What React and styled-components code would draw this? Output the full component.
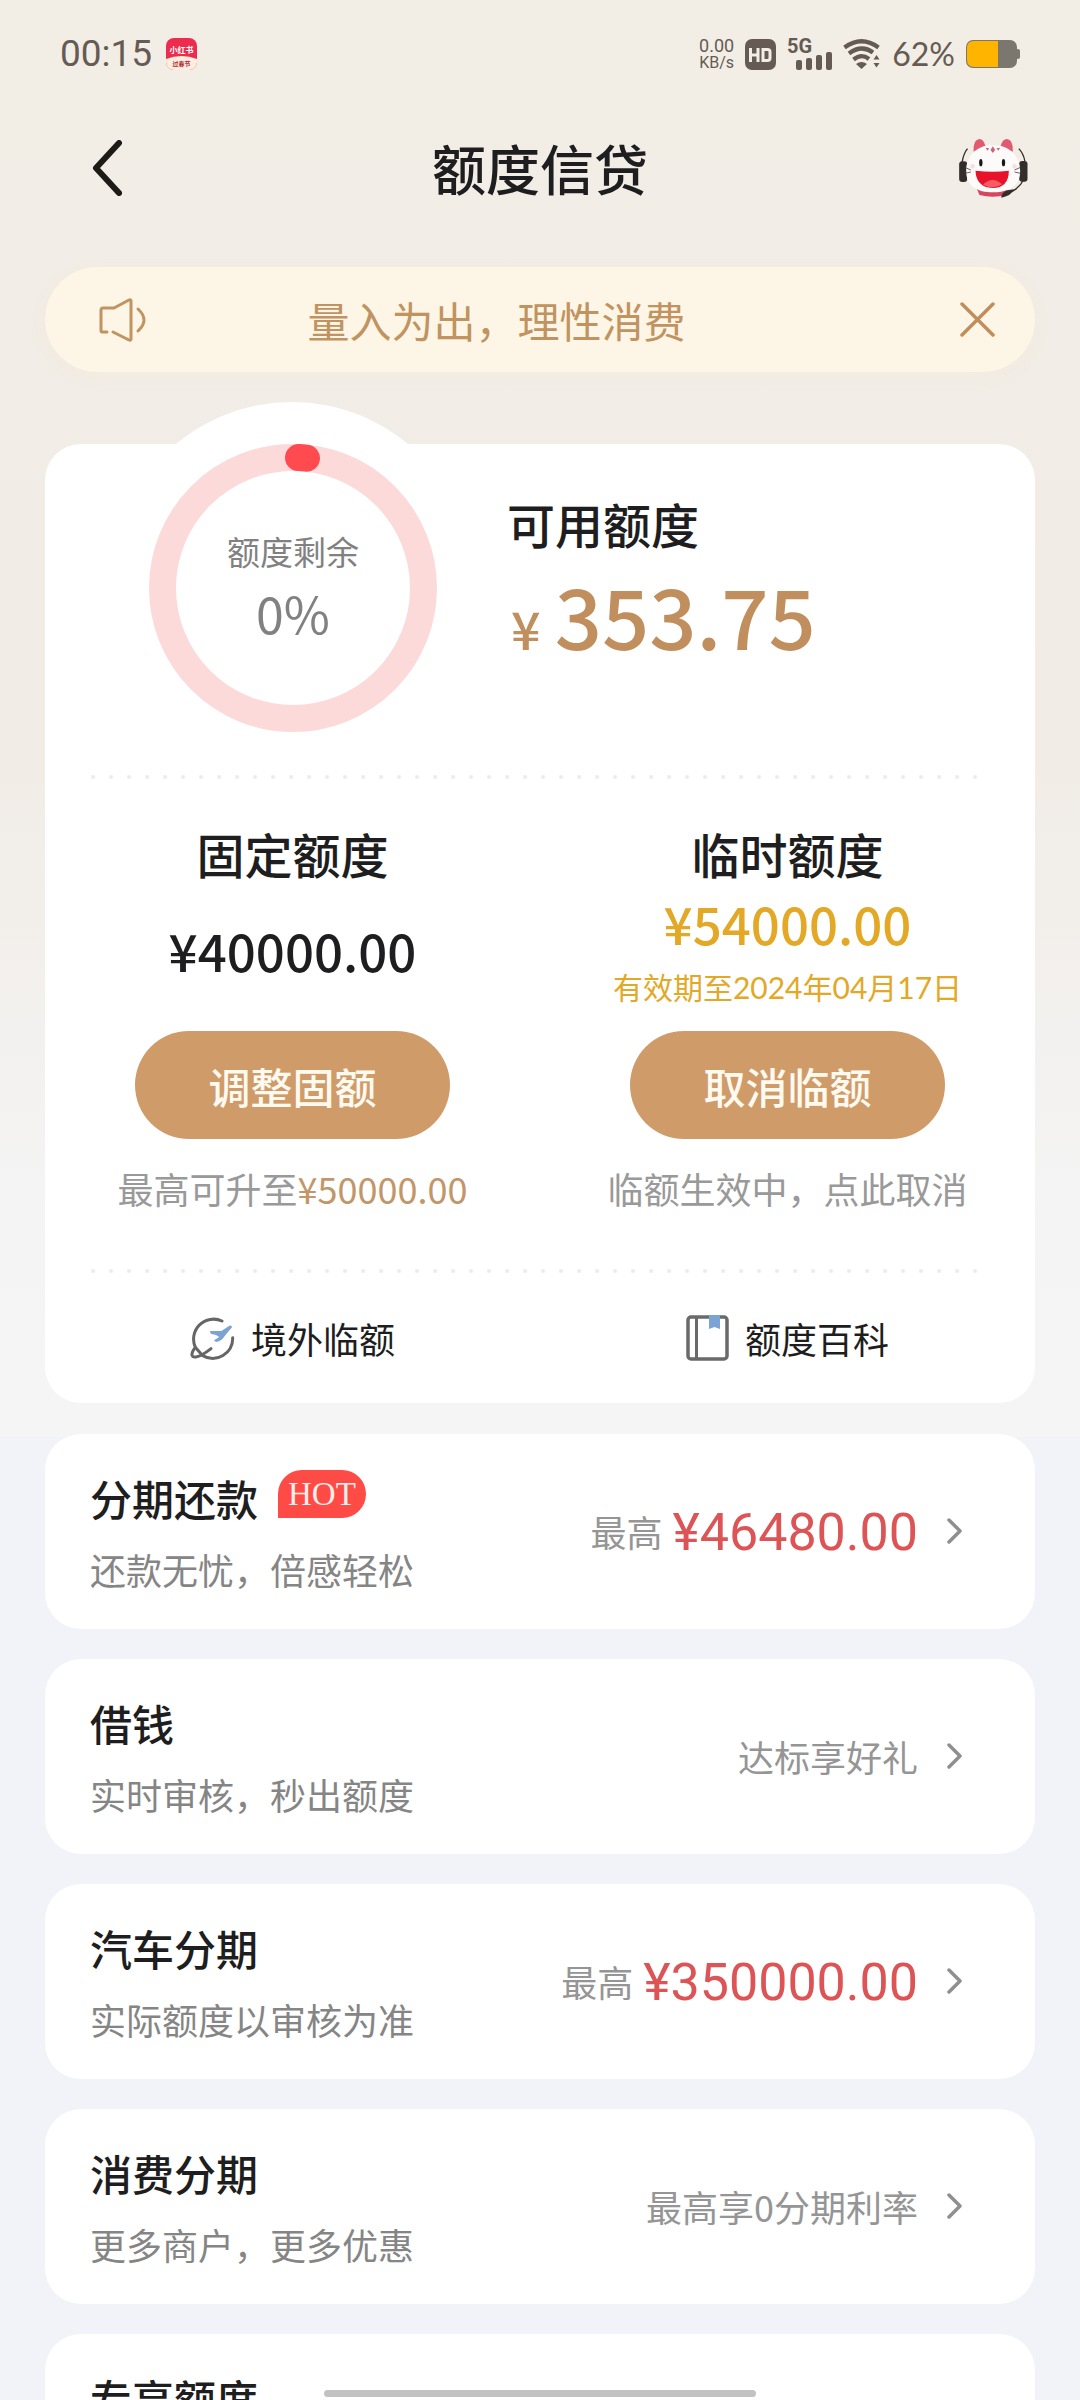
import React from 'react';
import styled, { createGlobalStyle } from 'styled-components';

const GlobalStyle = createGlobalStyle`
    * {
        box-sizing: border-box;
    }

    body {
        margin: 0;
        background-color: #f1f3f9;
        font-family: 'Noto Sans CJK SC', 'Noto Sans', sans-serif;
        color: #1e1e20;
    }

    h1,
    h2,
    h3,
    p {
        margin: 0;
        font-weight: 500;
    }

    button {
        padding: 0;
        border: 0;
        background: none;
        font: inherit;
        color: inherit;
        cursor: pointer;
    }

    a {
        color: inherit;
        text-decoration: none;
    }

    svg {
        display: block;
        flex-shrink: 0;
    }
`;

const Screen = styled.div`
    height: 100vh;
    overflow-y: auto;
    scrollbar-width: none;
`;

const Page = styled.div`
    padding-bottom: 60px;
    background: linear-gradient(#f2ede5 0, #f1ece6 760px, #f4f4f4 1200px, #f5f5f5 1437px)
        no-repeat;
    background-size: 100% 1437px;
`;

const StatusBar = styled.div`
    display: flex;
    align-items: center;
    justify-content: space-between;
    height: 108px;
    padding: 0 60px;
    color: #655b54;
`;

const StatusGroup = styled.div`
    display: flex;
    align-items: center;
    gap: ${({ gap }) => gap}px;
`;

const Clock = styled.span`
    font-family: Roboto, sans-serif;
    font-size: 37px;
    line-height: 44px;
`;

const NetSpeed = styled.div`
    display: flex;
    flex-direction: column;
    align-items: center;
    font-family: Roboto, sans-serif;
    font-size: 18px;
    line-height: 18px;
`;

const NetUnit = styled.span`
    font-size: 16px;
    line-height: 16px;
`;

const Percent = styled.span`
    font-family: Lato, sans-serif;
    font-size: 32px;
    line-height: 40px;
`;

const NavBar = styled.header`
    display: flex;
    align-items: center;
    justify-content: space-between;
    height: 120px;
    padding: 0 52px;
`;

const NavButton = styled.button`
    display: flex;
    width: 70px;
    justify-content: flex-end;
`;

const NavTitle = styled.h1`
    font-size: 54px;
    line-height: 76px;
`;

const Notice = styled.div`
    display: flex;
    align-items: center;
    height: 105px;
    margin: 39px 45px 0;
    padding: 0 40px 0 54px;
    border-radius: 53px;
    background-color: #fdf6e6;
    box-shadow: 0 4px 14px #f5ead766;
    color: #c09360;
`;

const NoticeText = styled.p`
    flex: 1;
    padding-right: 114px;
    font-size: 42px;
    font-weight: 400;
    line-height: 60px;
    text-align: center;
`;

const Card = styled.section`
    position: relative;
    margin: 72px 45px 0;
    border-radius: 36px;
    background-color: #ffffff;

    /* white bulge behind the ring */
    &::before {
        content: '';
        position: absolute;
        top: -42px;
        left: 66px;
        width: 362px;
        height: 362px;
        border-radius: 50%;
        background-color: #ffffff;
    }
`;

const Summary = styled.div`
    position: relative;
    display: flex;
    gap: 70px;
    padding: 0 46px 43px 104px;
`;

const Ring = styled.div`
    display: grid;
    width: 288px;
    height: 288px;
    place-items: center;

    > * {
        grid-area: 1 / 1;
    }
`;

const RingLabel = styled.div`
    padding-bottom: 8px;
    text-align: center;
    color: #818181;
`;

const RingName = styled.p`
    font-size: 33px;
    font-weight: 400;
    line-height: 50px;
`;

const RingValue = styled.p`
    margin-top: 6px;
    font-size: 50px;
    font-weight: 400;
    line-height: 60px;
`;

const Available = styled.div`
    padding-top: 49px;
`;

const Title = styled.h2`
    font-size: 48px;
    line-height: 60px;
`;

const Balance = styled.p`
    display: flex;
    align-items: baseline;
    gap: 14px;
    margin-top: 13px;
    padding-left: 4px;
    color: #c08f5d;
    font-size: 83px;
    line-height: 96px;
`;

const BalanceSign = styled.span`
    font-size: 52px;
`;

const DotLine = styled.div`
    height: 4px;
    margin: 0 46px;
    background: radial-gradient(circle at 2px 2px, #ebebeb 1px, #ffffff 3px) repeat-x;
    background-size: 18px 4px;
`;

const Columns = styled.div`
    display: grid;
    grid-template-columns: 1fr 1fr;
`;

const Limit = styled.div`
    display: flex;
    flex-direction: column;
    align-items: center;
    padding: 44px 0 56px;
`;

const LimitValue = styled.div`
    display: flex;
    flex-direction: column;
    align-items: center;
    justify-content: center;
    gap: 14px;
    height: 148px;
    padding-bottom: 14px;
    color: ${({ $active }) => ($active ? '#e3a826' : '#1e1e20')};
`;

const LimitAmount = styled.p`
    font-size: 51px;
    line-height: 60px;
`;

const LimitDate = styled.p`
    font-family: Lato, 'Noto Sans CJK SC', sans-serif;
    font-size: 30px;
    font-weight: 400;
    line-height: 40px;
`;

const LimitButton = styled.button`
    width: 315px;
    height: 108px;
    border-radius: 54px;
    background-color: #cf9c69;
    color: #fffaf0;
    font-size: 42px;
    font-weight: 500;
`;

const Caption = styled.p`
    margin-top: 24px;
    color: #999999;
    font-size: 36px;
    font-weight: 400;
    line-height: 50px;
`;

const CaptionAmount = styled.span`
    color: #c29668;
`;

const ToolLink = styled.a`
    display: flex;
    align-items: center;
    justify-content: center;
    gap: 16px;
    height: 130px;
    font-size: 36px;
`;

const ProductList = styled.nav`
    display: flex;
    flex-direction: column;
    gap: 30px;
    margin: 31px 45px 0;
`;

const Product = styled.a`
    display: flex;
    align-items: center;
    justify-content: space-between;
    padding: 34px 72px 35px 45px;
    border-radius: 36px;
    background-color: #ffffff;
`;

const ProductHead = styled.div`
    display: flex;
    align-items: center;
    gap: 20px;
`;

const ProductName = styled.h3`
    font-size: 42px;
    line-height: 60px;
`;

const HotBadge = styled.span`
    align-self: flex-start;
    margin-top: 2px;
    padding: 0 10px;
    border-radius: 24px 24px 24px 0;
    background-color: #ff4b45;
    color: #ffeeec;
    font-family: 'Liberation Serif', serif;
    font-size: 33px;
    line-height: 48px;
`;

const ProductDesc = styled.p`
    margin-top: 16px;
    color: #858585;
    font-size: 36px;
    font-weight: 400;
    line-height: 50px;
`;

const ProductInfo = styled.div`
    display: flex;
    align-items: center;
    color: #959595;
    font-size: 36px;
    line-height: 60px;

    svg {
        margin-left: 29px;
    }
`;

const ProductAmount = styled.span`
    margin-left: 10px;
    padding-top: 4px;
    color: #dc5456;
    font-family: Roboto, sans-serif;
    font-size: 52px;
`;

const HomeBar = styled.div`
    position: fixed;
    bottom: 3px;
    left: 30%;
    right: 30%;
    height: 7px;
    border-radius: 4px;
    background-color: #c2c2c2;
`;

const products = [
    { name: '分期还款', desc: '还款无忧，倍感轻松', hot: true, info: '最高', amount: '¥46480.00' },
    { name: '借钱', desc: '实时审核，秒出额度', info: '达标享好礼' },
    { name: '汽车分期', desc: '实际额度以审核为准', info: '最高', amount: '¥350000.00' },
    { name: '消费分期', desc: '更多商户，更多优惠', info: '最高享0分期利率' },
    { name: '专享额度' },
];

function AppBadge() {
    return (
        <svg width="31" height="32" viewBox="0 0 31 32">
            <rect width="31" height="32" rx="8" fill="#ec2b4e" />
            <path d="M0 21Q15.500 15 31 21V24A8 8 0 0 1 23 32H8A8 8 0 0 1 0 24Z" fill="#fdeedd" />
            <g fontFamily="Noto Sans CJK SC" fontWeight="700" textAnchor="middle">
                <text x="15.500" y="15" fontSize="8" fill="#ffffff">小红书</text>
                <text x="15.500" y="28" fontSize="6" fill="#b3243a">过春节</text>
            </g>
        </svg>
    );
}

function HdIcon() {
    return (
        <svg width="31" height="31" viewBox="0 0 31 31">
            <rect width="31" height="31" rx="7" fill="#655b54" />
            <g fill="none" stroke="#f2ede5" strokeWidth="3">
                <path d="M5.500 9V23M13 9V23M5.500 16H13" />
                <path d="M18 10.500H22.500Q25 10.500 25 13V19Q25 21.500 22.500 21.500H18Z" />
            </g>
        </svg>
    );
}

function SignalIcon() {
    return (
        <svg width="45" height="40" viewBox="0 -4 45 40" fill="#655b54">
            <text x="0" y="15" fontFamily="Roboto" fontWeight="700" fontSize="20">5G</text>
            <rect x="9" y="22" width="6" height="10" rx="2" />
            <rect x="19" y="20" width="6" height="12" rx="2" />
            <rect x="29" y="17" width="6" height="15" rx="2" />
            <rect x="39" y="14" width="6" height="18" rx="2" />
        </svg>
    );
}

function WifiIcon() {
    return (
        <svg width="38" height="30" viewBox="0 0 38 30">
            <g fill="none" stroke="#655b54" strokeWidth="4.200">
                <path d="M1.500 8.500Q18.500 -4 35.500 8.500" />
                <path d="M6 14.500Q18.500 5 30 13.500" />
                <path d="M10.500 20.500Q18.500 14 26 20" />
            </g>
            <path d="M13 25Q18.500 21 24 25L18.500 30ZM30.500 20.500 33.500 16 36.500 20.500ZM30.500 24 33.500 28.500 36.500 24Z" fill="#655b54" />
        </svg>
    );
}

function BatteryIcon() {
    return (
        <svg width="54" height="28" viewBox="0 0 54 28">
            <rect width="51" height="28" rx="7" fill="#7b776e" />
            <rect x="50" y="9" width="4" height="10" rx="2" fill="#7b776e" />
            <path d="M32 1V27H8Q1 27 1 20V8Q1 1 8 1Z" fill="#ffb400" />
        </svg>
    );
}

function BackIcon() {
    return (
        <svg width="30" height="56" viewBox="0 0 30 56">
            <path d="M27 3 4 28 27 53" fill="none" stroke="#1e1a16" strokeWidth="6" strokeLinecap="round" strokeLinejoin="round" />
        </svg>
    );
}

function CatIcon() {
    return (
        <svg width="69" height="62" viewBox="57 50 206 186">
            <path d="M82 85Q70 100 66 125M236 85Q250 100 254 122" fill="none" stroke="#332e2b" strokeWidth="4" />
            <rect x="57" y="123" width="24" height="62" rx="9" fill="#332e2b" />
            <rect x="237" y="122" width="25" height="62" rx="9" fill="#332e2b" />
            <path d="M110 205H205L197 224Q158 234 118 224Z" fill="#d6475f" />
            <path d="M100 94Q98 58 118 56Q130 56 136 78Z" fill="#e25a70" />
            <path d="M218 94Q220 58 200 56Q187 56 181 78Z" fill="#e25a70" />
            <path d="M158 75C205 73 240 106 240 152C240 198 205 216 158 216C112 216 78 198 78 152C78 106 112 73 158 75Z" fill="#fdfafa" />
            <path d="M158 78 165 89 158 98 151 89ZM136 82 147 84 142 91ZM180 82 169 84 174 91Z" fill="#d0637a" />
            <ellipse cx="122" cy="127" rx="5" ry="11" fill="#1b1715" />
            <ellipse cx="190" cy="127" rx="5" ry="11" fill="#1b1715" />
            <circle cx="97" cy="138" r="7" fill="#f8dfe0" />
            <circle cx="223" cy="138" r="7" fill="#f8dfe0" />
            <path d="M106 151Q158 157 206 151Q206 202 157 203Q108 200 106 151Z" fill="#e8132b" />
            <path d="M129 193Q156 166 186 192Q160 209 129 193Z" fill="#f65d63" />
            <path d="M74 141 92 149M74 159 92 155M241 141 223 149M241 159 223 155" stroke="#4c4340" strokeWidth="2.500" />
            <path d="M250 178Q240 200 215 214" fill="none" stroke="#332e2b" strokeWidth="4" />
            <path d="M183 232Q184 214 206 209L222 207Q212 228 183 232Z" fill="#332e2b" />
        </svg>
    );
}

function SpeakerIcon() {
    return (
        <svg width="48" height="46" viewBox="0 0 48 46" fill="none" stroke="currentColor" strokeWidth="3" strokeLinecap="round" strokeLinejoin="round">
            <path d="M8 35H3Q2 35 2 33V13Q2 11 4 11H15L30 3Q32 2 32 4V42Q32 44 30 43L14 35" />
            <path d="M39 12Q51 23 39 34" />
        </svg>
    );
}

function CloseIcon() {
    return (
        <svg width="35" height="35" viewBox="0 0 35 35">
            <path d="M2 2 33 33M33 2 2 33" stroke="#c08d5b" strokeWidth="3.500" strokeLinecap="round" />
        </svg>
    );
}

function Gauge() {
    return (
        <svg width="288" height="288" viewBox="0 0 288 288" fill="none" strokeWidth="27">
            <circle cx="144" cy="144" r="130.500" stroke="#fcdada" />
            <path d="M149.500 13.600A130.500 130.500 0 0 1 157.500 14.200" stroke="#ff4a50" strokeLinecap="round" />
        </svg>
    );
}

function PlaneIcon() {
    return (
        <svg width="45" height="46" viewBox="34 44 135 138">
            <g fill="none" stroke="#666666" strokeWidth="9" strokeLinecap="round">
                <path d="M130 62A60 60 0 0 0 50 141L72 166A60 60 0 0 0 162 112" />
                <path d="M50 141C38 156 34 173 52 170Q68 168 97 145" />
            </g>
            <path d="M152 76Q160 74 160 81L138 107Q130 122 112 125L106 120 122 110 112 104 96 100 94 92 128 92Z" fill="#7ba3d3" />
        </svg>
    );
}

function BookIcon() {
    return (
        <svg width="43" height="46" viewBox="0 0 43 46">
            <rect x="2" y="2" width="39" height="42" rx="3" fill="none" stroke="#6a6a6a" strokeWidth="3.500" />
            <path d="M10.500 2V44" stroke="#6a6a6a" strokeWidth="3" />
            <path d="M23 0H34V14L28.500 12 23 14Z" fill="#7ba3d3" />
        </svg>
    );
}

function ArrowIcon() {
    return (
        <svg width="16" height="28" viewBox="0 0 16 28">
            <path d="M2 3 13 14 2 25" fill="none" stroke="#8f8f8f" strokeWidth="3.500" strokeLinecap="round" strokeLinejoin="round" />
        </svg>
    );
}

function App() {
    return (
        <Screen>
            <GlobalStyle />
            <Page>
                <StatusBar>
                    <StatusGroup gap={14}>
                        <Clock>00:15</Clock>
                        <AppBadge />
                    </StatusGroup>
                    <StatusGroup gap={11}>
                        <NetSpeed>
                            <span>0.00</span>
                            <NetUnit>KB/s</NetUnit>
                        </NetSpeed>
                        <HdIcon />
                        <SignalIcon />
                        <WifiIcon />
                        <Percent>62%</Percent>
                        <BatteryIcon />
                    </StatusGroup>
                </StatusBar>
                <NavBar>
                    <NavButton aria-label="返回">
                        <BackIcon />
                    </NavButton>
                    <NavTitle>额度信贷</NavTitle>
                    <NavButton aria-label="客服">
                        <CatIcon />
                    </NavButton>
                </NavBar>
                <Notice>
                    <SpeakerIcon />
                    <NoticeText>量入为出，理性消费</NoticeText>
                    <button aria-label="关闭">
                        <CloseIcon />
                    </button>
                </Notice>
                <Card>
                    <Summary>
                        <Ring>
                            <Gauge />
                            <RingLabel>
                                <RingName>额度剩余</RingName>
                                <RingValue>0%</RingValue>
                            </RingLabel>
                        </Ring>
                        <Available>
                            <Title>可用额度</Title>
                            <Balance>
                                <BalanceSign>¥</BalanceSign>353.75
                            </Balance>
                        </Available>
                    </Summary>
                    <DotLine />
                    <Columns>
                        <Limit>
                            <Title>固定额度</Title>
                            <LimitValue>
                                <LimitAmount>¥40000.00</LimitAmount>
                            </LimitValue>
                            <LimitButton>调整固额</LimitButton>
                            <Caption>
                                最高可升至<CaptionAmount>¥50000.00</CaptionAmount>
                            </Caption>
                        </Limit>
                        <Limit>
                            <Title>临时额度</Title>
                            <LimitValue $active>
                                <LimitAmount>¥54000.00</LimitAmount>
                                <LimitDate>有效期至2024年04月17日</LimitDate>
                            </LimitValue>
                            <LimitButton>取消临额</LimitButton>
                            <Caption>临额生效中，点此取消</Caption>
                        </Limit>
                    </Columns>
                    <DotLine />
                    <Columns>
                        <ToolLink href="#overseas">
                            <PlaneIcon />
                            境外临额
                        </ToolLink>
                        <ToolLink href="#wiki">
                            <BookIcon />
                            额度百科
                        </ToolLink>
                    </Columns>
                </Card>
                <ProductList>
                    {products.map((item) => (
                        <Product key={item.name} href="#product">
                            <div>
                                <ProductHead>
                                    <ProductName>{item.name}</ProductName>
                                    {item.hot && <HotBadge>HOT</HotBadge>}
                                </ProductHead>
                                {item.desc && <ProductDesc>{item.desc}</ProductDesc>}
                            </div>
                            <ProductInfo>
                                {item.info}
                                {item.amount && <ProductAmount>{item.amount}</ProductAmount>}
                                {item.info && <ArrowIcon />}
                            </ProductInfo>
                        </Product>
                    ))}
                </ProductList>
            </Page>
            <HomeBar />
        </Screen>
    );
}

export default App;
